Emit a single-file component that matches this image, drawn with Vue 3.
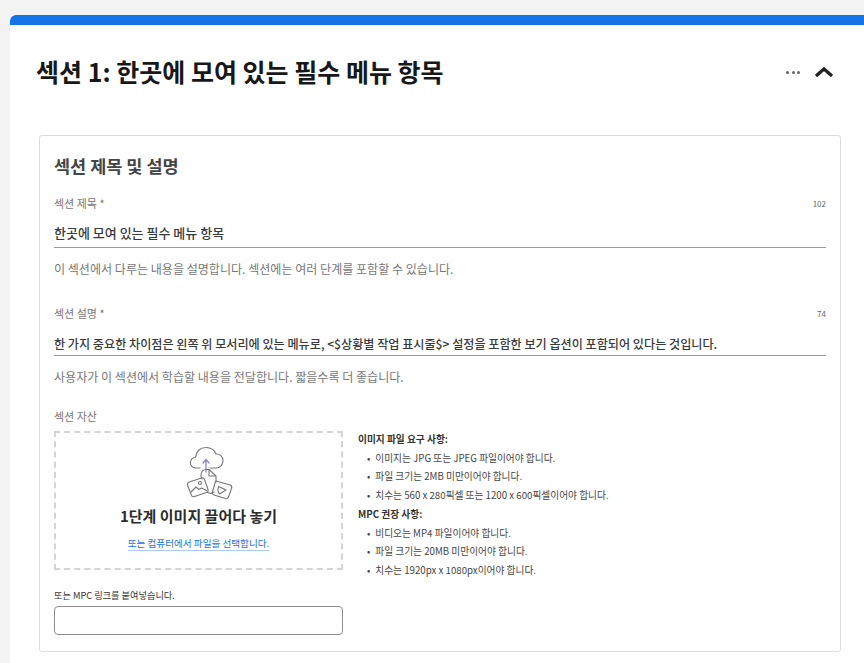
<script setup>
const imageReqs = ['이미지는 JPG 또는 JPEG 파일이어야 합니다.', '파일 크기는 2MB 미만이어야 합니다.', '치수는 560 x 280픽셀 또는 1200 x 600픽셀이어야 합니다.']
const videoReqs = ['비디오는 MP4 파일이어야 합니다.', '파일 크기는 20MB 미만이어야 합니다.', '치수는 1920px x 1080px이어야 합니다.']
</script>

<template>
  <div class="page">
    <section class="card">
      <div class="accent"></div>
      <header class="head">
        <h1>섹션 1: 한곳에 모여 있는 필수 메뉴 항목</h1>
        <div class="actions">
          <span class="dots"><i></i><i></i><i></i></span>
          <svg class="chev" width="20" height="12" viewBox="0 0 20 12"><path d="M2 10 L10 3 L18 10" fill="none" stroke="#222" stroke-width="3.2"/></svg>
        </div>
      </header>
      <div class="panel">
        <h2>섹션 제목 및 설명</h2>
        <div class="field first">
          <div class="label-row"><span>섹션 제목 *</span><small>102</small></div>
          <div class="value">한곳에 모여 있는 필수 메뉴 항목</div>
          <p class="hint">이 섹션에서 다루는 내용을 설명합니다. 섹션에는 여러 단계를 포함할 수 있습니다.</p>
        </div>
        <div class="field second">
          <div class="label-row"><span>섹션 설명 *</span><small>74</small></div>
          <div class="value">한 가지 중요한 차이점은 왼쪽 위 모서리에 있는 메뉴로, &lt;$상황별 작업 표시줄$&gt; 설정을 포함한 보기 옵션이 포함되어 있다는 것입니다.</div>
          <p class="hint">사용자가 이 섹션에서 학습할 내용을 전달합니다. 짧을수록 더 좋습니다.</p>
        </div>
        <div class="asset-label">섹션 자산</div>
        <div class="assets">
          <div class="left">
            <div class="drop">
              <svg class="upload" width="48" height="54" viewBox="0 0 48 54" fill="none" stroke="#777" stroke-width="1.1" stroke-linejoin="round" stroke-linecap="round">
                <path d="M14 22 H10 C6 22 4 19 4.500 16 C5 13 7 11.500 9.500 11.500 C10.500 5 14.500 1.500 20 1.500 C25 1.500 28.500 4 30 8 C33.500 7.500 37 10.500 37 14.500 C37 19 34 22 30 22 H24"/>
                <path d="M20 26 V14 M17 17 L20 13.500 L23 17" stroke="#8b86c9" stroke-width="1.300"/>
                <path d="M16 33 C14.500 30 15 27 16.500 25 C17.500 24 18.500 23.500 20 23.500 H23 V30 H30 V36 M23 23.500 L30 30"/>
                <path d="M21 46 C23 47.500 26 47.500 28 46"/>
                <path d="M1.500 39 C1.200 37.500 2 36.500 3.300 36 L15.500 32 C17 31.500 18 32 18.500 33.500 L22 43.500 C22.500 45 21.800 46 20.500 46.500 L8.500 50.500 C7 51 5.800 50.500 5.300 49 Z"/>
                <circle cx="14" cy="37" r="1.500"/>
                <path d="M5 46 L10 41 L13 43.500 L15.500 42 L20.500 44.500"/>
                <path d="M30 35 L44 39 C45.500 39.500 46 40.500 45.700 42 L42.500 51 C42 52.500 41 53 39.500 52.600 L28 49 C26.500 48.500 26 47.500 26.500 46 L29 37 C29.200 36 29.500 35.500 30 35 Z"/>
                <path d="M32.500 40.500 L40 44 L33.500 48 C32 46 31.500 43 32.500 40.500 Z"/>
              </svg>
              <div class="drop-title">1단계 이미지 끌어다 놓기</div>
              <a class="drop-link">또는 컴퓨터에서 파일을 선택합니다.</a>
            </div>
            <div class="paste-label">또는 MPC 링크를 붙여넣습니다.</div>
            <div class="input"></div>
          </div>
          <div class="reqs">
            <div class="req-title">이미지 파일 요구 사항:</div>
            <div v-for="item in imageReqs" :key="item" class="req"><span>•</span>{{ item }}</div>
            <div class="req-title">MPC 권장 사항:</div>
            <div v-for="item in videoReqs" :key="item" class="req"><span>•</span>{{ item }}</div>
          </div>
        </div>
      </div>
    </section>
  </div>
</template>

<style>
html, body { margin: 0; background: #f3f3f3; overflow: hidden; }
</style>

<style scoped>
.page {
  box-sizing: border-box;
  height: 663px;
  padding: 15px 0 0 10px;
  overflow: hidden;
  font-family: "Noto Sans CJK KR", "Noto Sans", sans-serif;
  color: #222;
}
.card { background: #fff; height: 648px; }
.accent { height: 10px; background: #1473e6; border-radius: 6px 0 0 0; }
.head {
  display: flex;
  align-items: center;
  justify-content: space-between;
  height: 94px;
  padding: 0 30px 0 26px;
}
h1 { margin: 0 0 2px; font-size: 25px; font-weight: 700; color: #181818; line-height: 32px; }
.actions { display: flex; align-items: center; gap: 14px; }
.dots { display: flex; gap: 2.500px; }
.dots i { width: 3px; height: 3px; border-radius: 50%; background: #666; }
.chev { display: block; }
.panel {
  box-sizing: border-box;
  margin: 16px 23px 0 29px;
  height: 517px;
  border: 1px solid #dcdcdc;
  border-radius: 3px;
  padding: 18px 14px 0 14px;
}
h2 { margin: 0; font-size: 17.500px; line-height: 24px; font-weight: 700; color: #444; }
.field.first { margin-top: 17px; }
.field.second { margin-top: 28px; }
.label-row { display: flex; justify-content: space-between; align-items: center; height: 16px; font-size: 11px; color: #777; }
.label-row small { font-size: 8px; color: #666; }
.value {
  box-sizing: border-box;
  margin-top: 12px;
  height: 25px;
  line-height: 20px;
  font-size: 13px;
  font-weight: 500;
  color: #3a3a3a;
  border-bottom: 1px solid #999;
  white-space: nowrap;
}
.second .value { margin-top: 13px; height: 22px; font-size: 12.120px; }
.hint { margin: 12px 0 0; font-size: 12.050px; line-height: 17px; color: #777; }
.asset-label { margin-top: 23px; font-size: 11px; line-height: 16px; color: #777; }
.assets { display: flex; gap: 15px; margin-top: 7px; }
.left { width: 289px; }
.drop {
  box-sizing: border-box;
  height: 139px;
  border: 2px dashed #d4d4d4;
  display: flex;
  flex-direction: column;
  align-items: center;
  padding-top: 13px;
}
.upload { display: block; margin-left: 22px; }
.drop-title { margin-top: 5px; font-size: 15px; line-height: 22px; font-weight: 700; color: #2c2c2c; }
.drop-link { margin-top: 9px; font-size: 9.600px; line-height: 14px; color: #1473e6; border-bottom: 1px solid #a9cdf5; }
.paste-label { margin-top: 18px; font-size: 9.200px; line-height: 14px; color: #333; }
.input { box-sizing: border-box; margin-top: 4px; height: 29px; border: 1px solid #8e8e8e; border-radius: 4px; }
.reqs { margin-top: -1px; font-size: 9.700px; color: #444; }
.req-title { font-weight: 700; line-height: 18.700px; color: #333; }
.req { line-height: 18.700px; padding-left: 9px; }
.req span { margin-right: 5px; }
</style>
